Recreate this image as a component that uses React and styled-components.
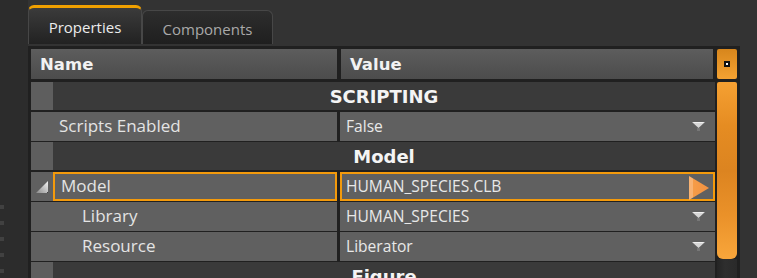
import React from "react";
import styled, { createGlobalStyle, css } from "styled-components";

const Global = createGlobalStyle`
  html, body { margin: 0; padding: 0; background: #333333; }
  body { font-family: "Open Sans", "Noto Sans", sans-serif; }
`;

const Page = styled.div`
  display: flex;
  width: 757px;
  height: 278px;
  overflow: hidden;
  background: #333333;
`;

const LeftStrip = styled.div`
  width: 28px;
  flex: none;
  background: #2c2c2c;
  display: flex;
  flex-direction: column;
  gap: 12px;
  padding-top: 205px;
  box-sizing: border-box;
`;

const StripDot = styled.span`
  display: block;
  flex: none;
  width: 4px;
  height: 4px;
  background: #414141;
`;

const Main = styled.div`
  width: 712px;
  flex: none;
  display: flex;
  flex-direction: column;
`;

const TabBar = styled.div`
  height: 46px;
  flex: none;
  display: flex;
  align-items: flex-end;
  padding-bottom: 2px;
  box-sizing: border-box;
`;

const Tab = styled.div`
  box-sizing: border-box;
  display: flex;
  align-items: center;
  justify-content: center;
  font-family: "Open Sans", sans-serif;
  font-size: 15px;
  border: 1px solid #474747;
  border-bottom: none;
  border-radius: 6px 6px 0 0;
  ${(p) =>
    p.$active
      ? css`
          width: 114px;
          height: 39px;
          color: #ececec;
          border-top: 3px solid #f0a000;
          background: linear-gradient(#3b3b3b, #222222);
          padding-top: 1px;
        `
      : css`
          width: 131px;
          height: 34px;
          color: #a9a9a9;
          background: linear-gradient(#2d2d2d, #1f1f1f);
          padding-top: 2px;
        `}
`;

const Frame = styled.div`
  flex: none;
  height: 232px;
  display: flex;
  gap: 2px;
  padding: 3px 3px 0 3px;
  box-sizing: border-box;
  background: #202020;
`;

const Table = styled.div`
  width: 684px;
  flex: none;
  display: flex;
  flex-direction: column;
  gap: 2px;
`;

const HeaderRow = styled.div`
  display: grid;
  grid-template-columns: 306px 372px;
  column-gap: 4px;
  height: 30px;
  margin-bottom: 1px;
  flex: none;
`;

const HeaderCell = styled.div`
  display: flex;
  align-items: center;
  padding-left: 9px;
  background: linear-gradient(#5d5d5d, #4c4c4c);
  color: #f2f2f2;
  font-family: "DejaVu Sans", Verdana, sans-serif;
  font-weight: bold;
  font-size: 16.5px;
`;

const SectionBar = styled.div`
  display: flex;
  height: 28px;
  flex: none;
`;

const Gutter = styled.div`
  width: 22px;
  flex: none;
  display: flex;
  align-items: center;
  justify-content: center;
  background: ${(p) => (p.$tone === "light" ? "#5e5e5e" : "#606060")};
`;

const SectionTitle = styled.div`
  flex: 1;
  display: flex;
  align-items: center;
  justify-content: center;
  background: #3a3a3a;
  color: #f4f4f4;
  font-family: "DejaVu Sans", Verdana, sans-serif;
  font-weight: bold;
  font-size: 18px;
`;

const Row = styled.div`
  display: grid;
  grid-template-columns: 306px 375px;
  column-gap: 3px;
  height: 28px;
  flex: none;
`;

const NameCell = styled.div`
  display: flex;
  background: #606060;
`;

const Label = styled.div`
  flex: 1;
  display: flex;
  align-items: center;
  box-sizing: border-box;
  border: 2px solid ${(p) => (p.$selected ? "#f39a0c" : "transparent")};
  padding-left: ${(p) => (p.$indent ? 27 : p.$selected ? 6 : 4)}px;
  padding-bottom: 2px;
  color: #e4e4e4;
  font-size: 17px;
  white-space: nowrap;
`;

const ValueCell = styled.div`
  display: flex;
  align-items: center;
  justify-content: space-between;
  box-sizing: border-box;
  background: #606060;
  border: 2px solid ${(p) => (p.$selected ? "#f39a0c" : "transparent")};
  padding: 0 ${(p) => (p.$selected ? 4 : 8)}px 0 4px;
  color: #e8e8e8;
  font-size: 15.6px;
  white-space: nowrap;
`;

const ValueText = styled.span`
  padding-bottom: 2px;
`;

const ScrollBar = styled.div`
  width: 20px;
  flex: none;
  display: flex;
  flex-direction: column;
  gap: 3px;
`;

const ScrollButton = styled.div`
  height: 30px;
  flex: none;
  border-radius: 2px;
  background: linear-gradient(#d7861c, #f4a232);
  display: flex;
  align-items: center;
  justify-content: center;
`;

const ButtonMark = styled.span`
  width: 2px;
  height: 2px;
  background: #ffffff;
  border: 2px solid #111111;
`;

const Thumb = styled.div`
  height: 177px;
  flex: none;
  border-radius: 2px 2px 6px 6px;
  background: linear-gradient(#f5a032 0%, #e58c22 25%, #dc8420 50%, #ea9129 75%, #f8a63b 100%);
`;

const Track = styled.div`
  flex: 1;
  margin-top: -3px;
  background: linear-gradient(90deg, #252525, #2e2e2e 40%, #2a2a2a);
`;

const DropArrow = () => (
  <svg width="13" height="10" viewBox="0 0 13 10">
    <polygon points="0,0 13,0 6.5,6" fill="#d6d6d6" />
    <polygon points="1,0 12,0 11,1 2,1" fill="#f0f0f0" />
    <rect x="5" y="6" width="3" height="3" fill="#777777" />
  </svg>
);

const PlayArrow = () => (
  <svg width="20" height="24" viewBox="0 0 20 24" style={{ marginBottom: "-2px" }}>
    <defs>
      <linearGradient id="pa" x1="0" x2="1" y1="0" y2="0">
        <stop offset="0" stopColor="#f8b272" />
        <stop offset="0.18" stopColor="#f8b272" />
        <stop offset="0.2" stopColor="#f59c48" />
        <stop offset="1" stopColor="#f39140" />
      </linearGradient>
    </defs>
    <polygon points="0,0 20,12 0,24" fill="url(#pa)" />
  </svg>
);

const Expander = () => (
  <svg width="12" height="12" viewBox="0 0 12 12">
    <defs>
      <linearGradient id="ex" x1="1" x2="0" y1="0" y2="1">
        <stop offset="0" stopColor="#f4f4f4" />
        <stop offset="1" stopColor="#8a8a8a" />
      </linearGradient>
    </defs>
    <polygon points="12,0 12,12 0,12" fill="url(#ex)" />
    <rect x="11" y="11" width="1" height="1" fill="#444" />
  </svg>
);

const Section = ({ title }) => (
  <SectionBar>
    <Gutter $tone="light" />
    <SectionTitle>{title}</SectionTitle>
  </SectionBar>
);

const PropRow = ({ name, value, selected, indent, expander, dropdown, arrow }) => (
  <Row>
    <NameCell>
      <Gutter>{expander && <Expander />}</Gutter>
      <Label $selected={selected} $indent={indent}>
        {name}
      </Label>
    </NameCell>
    <ValueCell $selected={selected}>
      <ValueText>{value}</ValueText>
      {dropdown && <DropArrow />}
      {arrow && <PlayArrow />}
    </ValueCell>
  </Row>
);

export default function App() {
  return (
    <>
      <Global />
      <Page>
        <LeftStrip>
          {[0, 1, 2, 3, 4].map((i) => (
            <StripDot key={i} />
          ))}
        </LeftStrip>
        <Main>
          <TabBar>
            <Tab $active>Properties</Tab>
            <Tab>Components</Tab>
          </TabBar>
          <Frame>
            <Table>
              <HeaderRow>
                <HeaderCell>Name</HeaderCell>
                <HeaderCell>Value</HeaderCell>
              </HeaderRow>
              <Section title="SCRIPTING" />
              <PropRow name="Scripts Enabled" value="False" dropdown />
              <Section title="Model" />
              <PropRow name="Model" value="HUMAN_SPECIES.CLB" selected expander arrow />
              <PropRow name="Library" value="HUMAN_SPECIES" indent dropdown />
              <PropRow name="Resource" value="Liberator" indent dropdown />
              <Section title="Figure" />
            </Table>
            <ScrollBar>
              <ScrollButton>
                <ButtonMark />
              </ScrollButton>
              <Thumb />
              <Track />
            </ScrollBar>
          </Frame>
        </Main>
      </Page>
    </>
  );
}
